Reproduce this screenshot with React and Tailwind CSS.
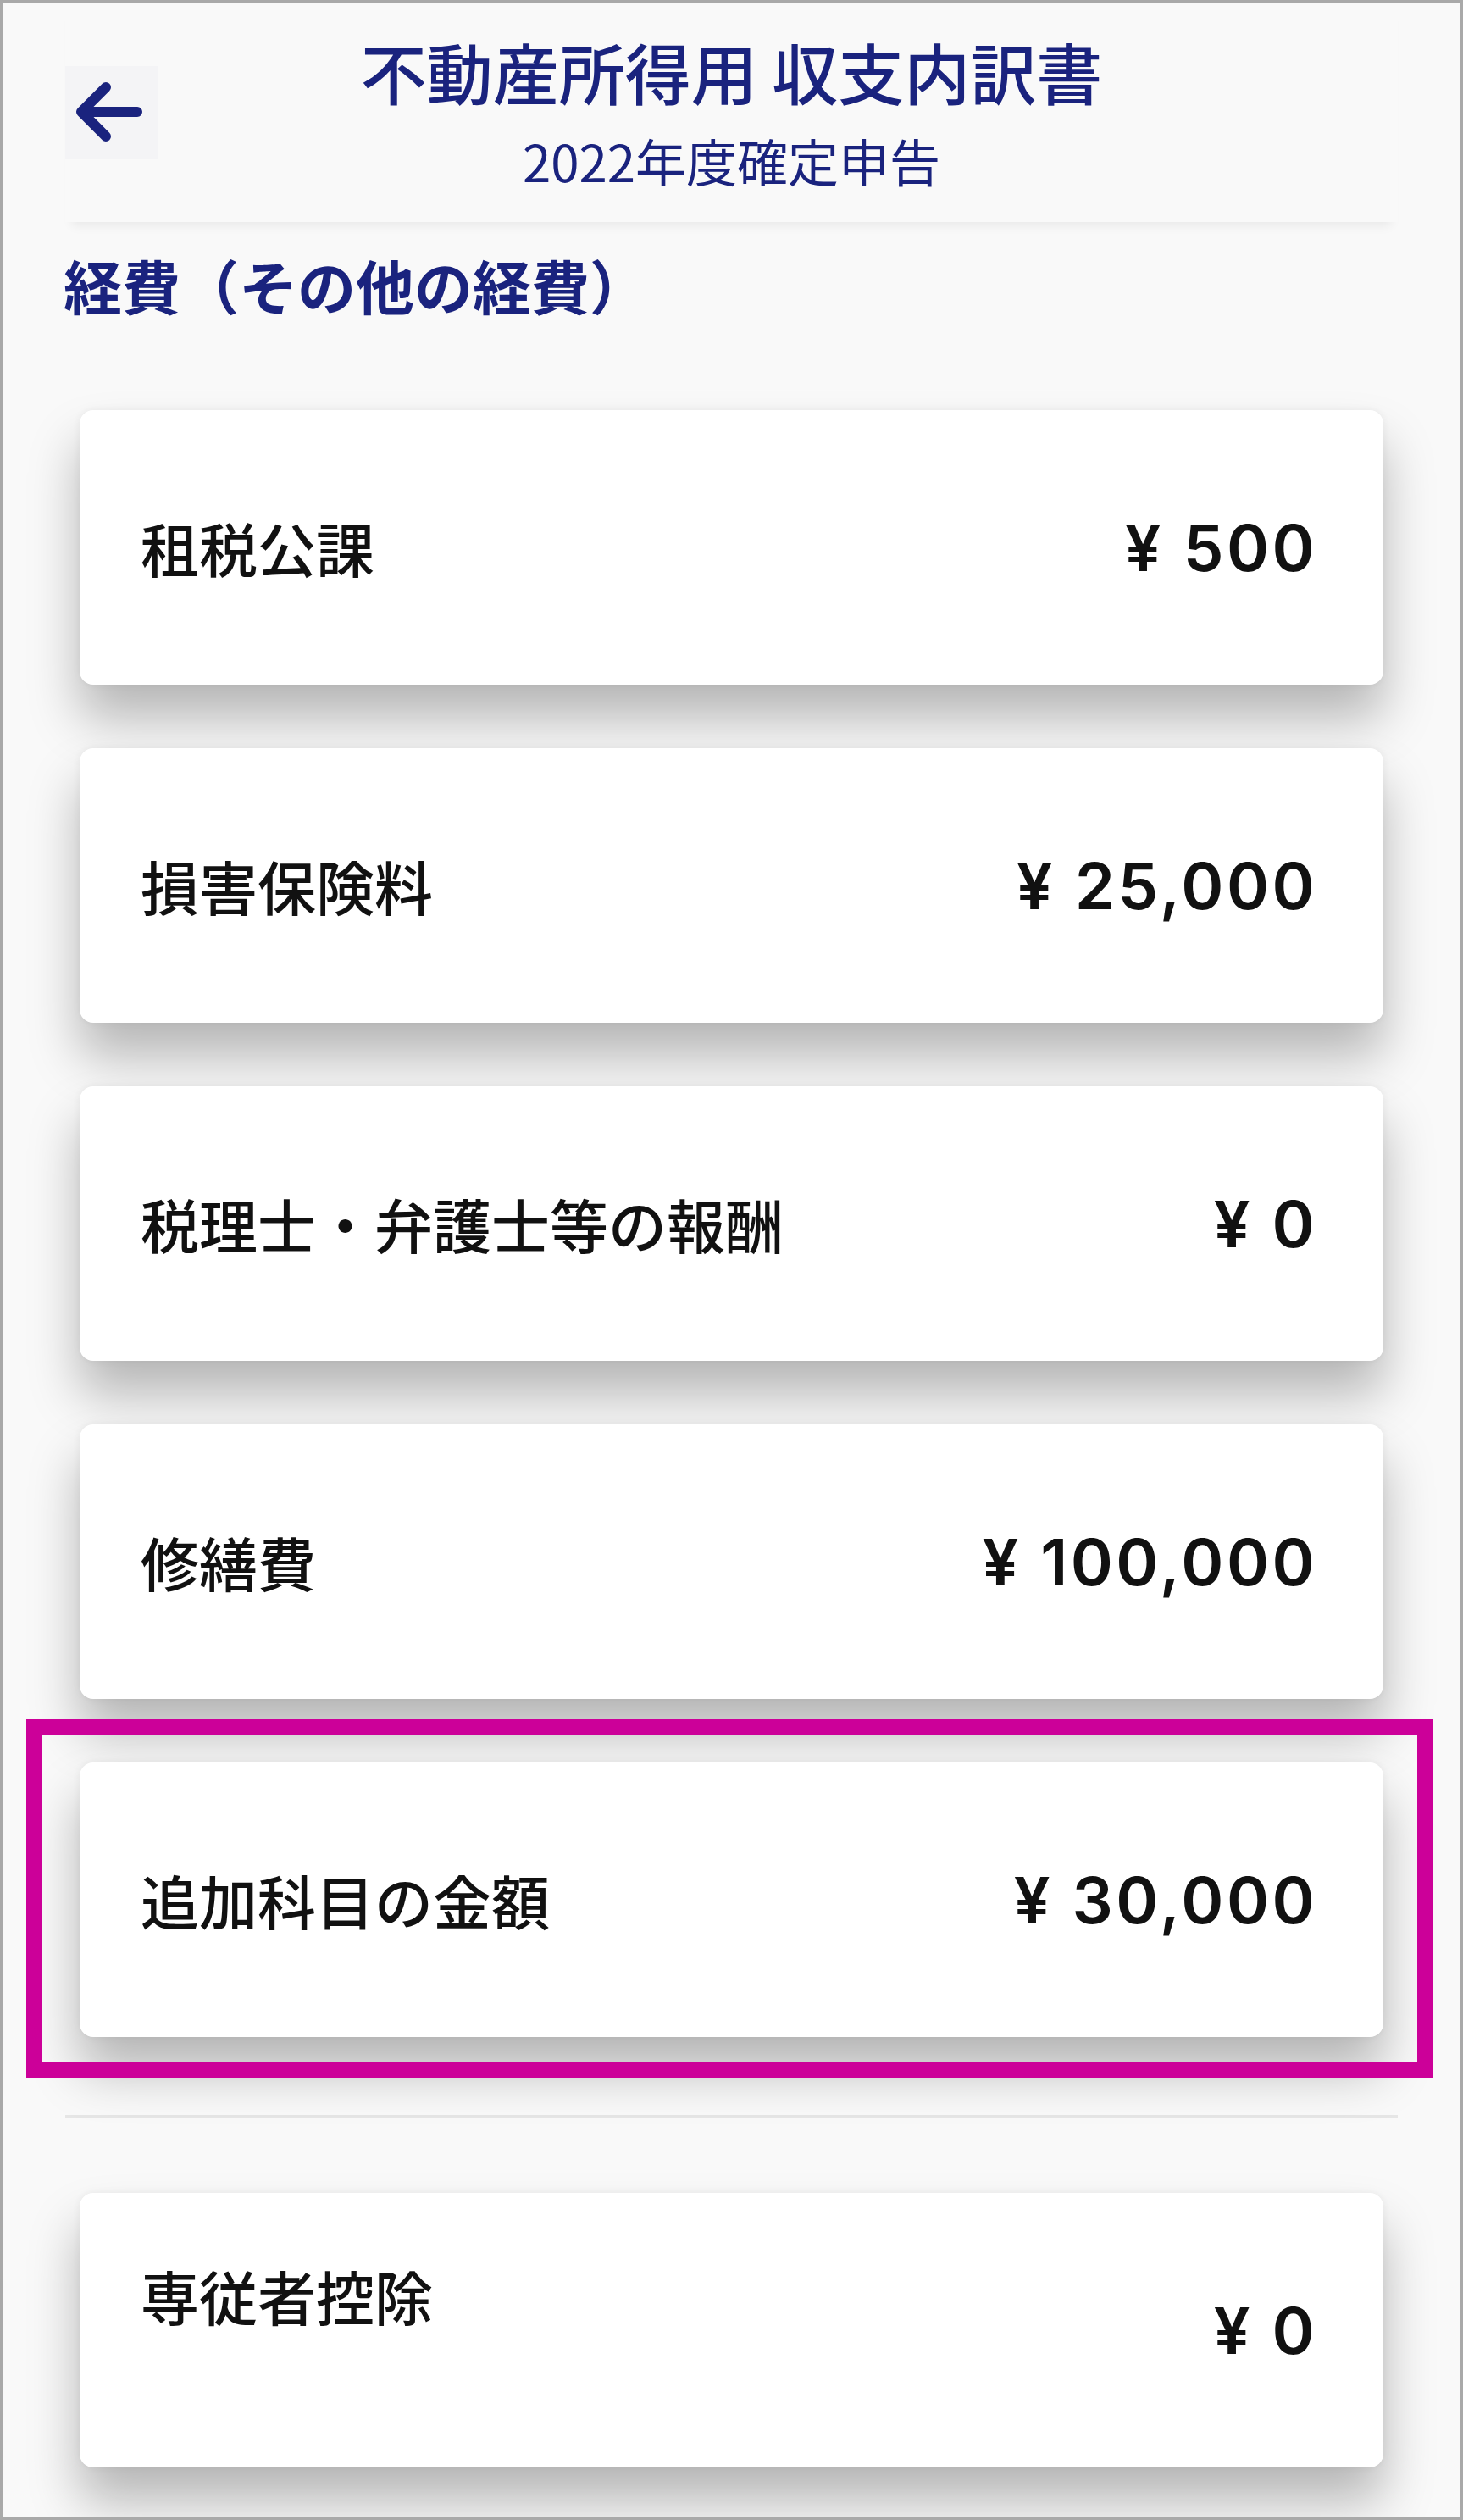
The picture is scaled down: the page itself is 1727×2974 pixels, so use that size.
import React from "react";

const cjk = { fontFamily: '"Noto Sans CJK JP", "Noto Sans", sans-serif' };
const num = { fontFamily: 'Inter, "Noto Sans CJK JP", sans-serif' };

function Card({ label, amount, top = false }) {
  return (
    <div className="h-[324px] rounded-[16px] bg-white flex items-center justify-between pl-[72px] pr-[78px] shadow-[0_40px_60px_rgba(0,0,0,0.27),0_0_10px_rgba(0,0,0,0.06)]">
      <div
        style={cjk}
        className={
          "text-[69px] leading-none font-medium text-[#111111] " +
          (top ? "self-start mt-[87px]" : "")
        }
      >
        {label}
      </div>
      <div style={num} className="text-[76px] leading-none font-semibold tracking-[0.045em] text-[#111111]">
        {amount}
      </div>
    </div>
  );
}

export default function App() {
  return (
    <div className="relative w-[1727px] h-[2974px] bg-[#f9f9f9] border-[3px] border-[#a9a9a9] overflow-hidden">
      <header className="mx-[74px] h-[259px] grid grid-cols-[110px_1fr_110px] pt-[42px] shadow-[0_12px_12px_-8px_rgba(0,0,0,0.07)]">
        <div className="mt-[33px] w-[110px] h-[110px] bg-[#f4f4f6] flex items-center justify-center">
          <svg width="110" height="110" viewBox="0 0 110 110" fill="none">
            <path
              d="M19 54 H85 M48 25 L19 54 L48 83"
              stroke="#1a237e"
              strokeWidth="12"
              strokeLinecap="round"
              strokeLinejoin="round"
            />
          </svg>
        </div>
        <div className="flex flex-col items-center text-[#1a237e]" style={cjk}>
          <div className="text-[78px] leading-none font-medium">不動産所得用 収支内訳書</div>
          <div className="mt-[36px] text-[60px] leading-none font-normal">2022年度確定申告</div>
        </div>
        <div />
      </header>

      <h2 style={cjk} className="mt-[40px] pl-[72px] text-[69px] leading-none font-bold text-[#1a237e]">
        経費（その他の経費）
      </h2>

      <div className="mx-[91px] mt-[113px] flex flex-col gap-[75px]">
        <Card label="租税公課" amount="¥ 500" />
        <Card label="損害保険料" amount="¥ 25,000" />
        <Card label="税理士・弁護士等の報酬" amount="¥ 0" />
        <Card label="修繕費" amount="¥ 100,000" />
        <Card label="追加科目の金額" amount="¥ 30,000" />
      </div>

      <div className="mx-[74px] mt-[92px] h-[4px] bg-[#e6e6e6]" />

      <div className="mx-[91px] mt-[88px]">
        <Card label="専従者控除" amount="¥ 0" top />
      </div>

      <div className="absolute left-[28px] top-[2026px] w-[1660px] h-[423px] border-[18px] border-[#cc0099]" />
    </div>
  );
}
